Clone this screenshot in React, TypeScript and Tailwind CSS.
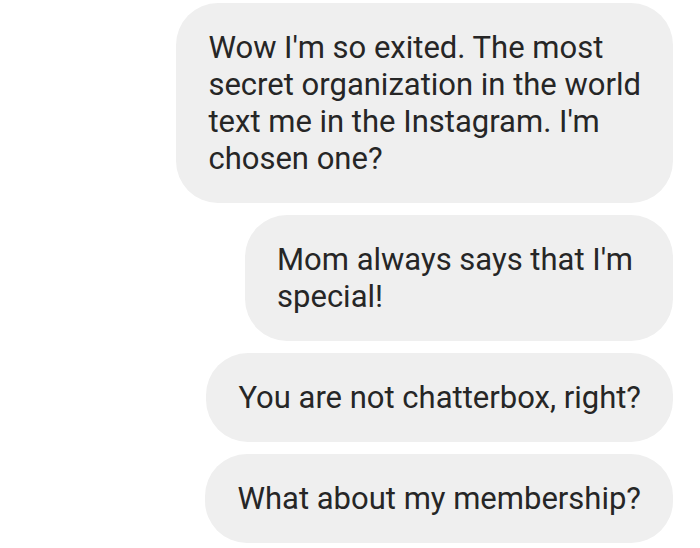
const messages = [
  { text: "Wow I'm so exited. The most\nsecret organization in the world\ntext me in the Instagram. I'm\nchosen one?", pr: "pr-8" },
  { text: "Mom always says that I'm\nspecial!", pr: "pr-10" },
  { text: "You are not chatterbox, right?", pr: "pr-8" },
  { text: "What about my membership?", pr: "pr-8" },
];

export default function App() {
  return (
    <div className="w-[700px] h-[548px] bg-white overflow-hidden pt-[3px] pr-[27px] flex flex-col items-end gap-3 font-['Roboto',sans-serif]">
      {messages.map((m) => (
        <div
          key={m.text}
          className={`w-fit bg-[#efefef] rounded-[42px] pl-8 ${m.pr} py-[26px] text-[31px] leading-[37px] text-[#262626] whitespace-pre-line`}
        >
          {m.text}
        </div>
      ))}
    </div>
  );
}
